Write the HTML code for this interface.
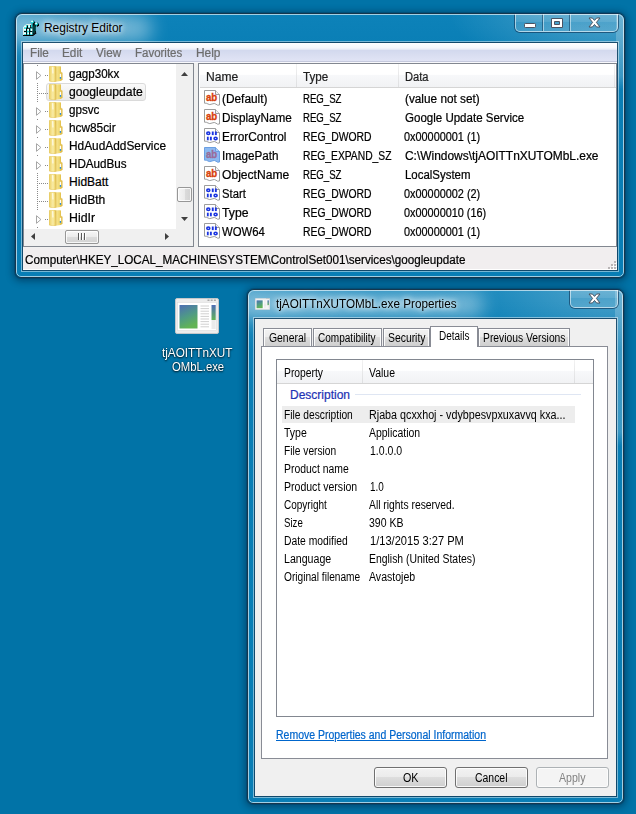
<!DOCTYPE html>
<html><head><meta charset="utf-8"><title>Registry Editor</title>
<style>
html,body{margin:0;padding:0}
body{width:636px;height:814px;position:relative;overflow:hidden;background:#0173a7;font-family:"Liberation Sans",sans-serif;font-size:12px;color:#000}
.a{position:absolute;white-space:pre}
.x{position:absolute;white-space:pre;display:block;transform-origin:0 0;-webkit-text-stroke:.22px currentColor}
.n{-webkit-text-stroke:0 transparent}
.win{position:absolute;border:1px solid #16364c;border-radius:7px 7px 6px 6px;box-shadow:0 0 0 1px rgba(0,35,65,.22),0 1px 7px 2px rgba(0,20,45,.44);box-sizing:border-box;background:#097eb5;overflow:visible}
.win .bg{position:absolute;left:0;top:0;right:0;bottom:0;border-radius:6px 6px 5px 5px;overflow:hidden}
.win .bg:before{content:"";position:absolute;left:0;top:0;right:0;bottom:0;border:1px solid rgba(255,255,255,.62);border-radius:6px 6px 5px 5px;z-index:3}
.cedge{position:absolute;box-sizing:border-box;border:1px solid rgba(20,60,90,.8);box-shadow:0 0 0 1px rgba(255,255,255,.45)}
.title{color:#000;text-shadow:0 0 5px rgba(255,255,255,.9),0 0 8px rgba(255,255,255,.8),0 0 12px rgba(255,255,255,.7)}
.cbtns{position:absolute;top:0;height:18px;box-sizing:border-box;border:1px solid rgba(255,255,255,.55);border-top:none;border-radius:0 0 5px 5px;box-shadow:0 0 0 1px rgba(15,55,90,.65);background:linear-gradient(180deg,rgba(255,255,255,.22) 0,rgba(255,255,255,.16) 45%,rgba(255,255,255,.08) 50%,rgba(255,255,255,.14) 100%)}
.cbtns i{position:absolute;top:0;width:1px;height:17px;background:rgba(255,255,255,.5);box-shadow:-1px 0 0 rgba(15,55,90,.55)}
.menu{position:absolute;left:23px;top:43px;width:594px;height:19px;background:linear-gradient(180deg,#ffffff 0,#f6f7fc 5px,#e7eaf6 6.5px,#d3d9ee 7.5px,#e1e4f5 18px,#c5c9dd 18px,#c5c9dd 19px);border-bottom:1px solid #f8f8fc}
.pane{position:absolute;background:#fff;box-sizing:border-box;border:1px solid #828790}
.fold{position:absolute;width:14px;height:16px}
.exp{position:absolute;width:6px;height:9px}
.vd{position:absolute;width:1px;background:repeating-linear-gradient(180deg,#8a8a8a 0,#8a8a8a 1px,transparent 1px,transparent 2px)}
.hd{position:absolute;height:1px;background:repeating-linear-gradient(90deg,#8a8a8a 0,#8a8a8a 1px,transparent 1px,transparent 2px)}
.sel{position:absolute;box-sizing:border-box;border:1px solid #dadada;border-radius:3px;background:linear-gradient(180deg,#fafafa,#eaeaea)}
.hdr{position:absolute;background:linear-gradient(180deg,#fff 0,#fff 45%,#f7f8fa 50%,#f1f2f4 100%);border-bottom:1px solid #d5d5d5}
.hsep{position:absolute;width:1px;background:linear-gradient(180deg,#f2f2f2,#dedfe1)}
.ic{position:absolute;width:16px;height:16px}
.sb{position:absolute;background:#f0f0f0}
.thumb{position:absolute;box-sizing:border-box;border:1px solid #979797;border-radius:2px}
.tab{position:absolute;box-sizing:border-box;border:1px solid #898c95;border-bottom:none;background:linear-gradient(180deg,#f2f2f2 0,#ebebeb 50%,#dddddd 50%,#cfcfcf 100%);box-shadow:inset 1px 1px 0 rgba(255,255,255,.9),inset -1px 0 0 rgba(255,255,255,.9)}
.btn{position:absolute;box-sizing:border-box;border:1px solid #707070;border-radius:3px;background:linear-gradient(180deg,#f2f2f2 0,#ebebeb 50%,#dddddd 50%,#cfcfcf 100%);box-shadow:inset 0 0 0 1px rgba(255,255,255,.85)}
</style></head><body>
<div class="win" style="left:15px;top:13px;width:610px;height:265px"><div class="bg"><div class="a" style="left:0;top:0;right:0;bottom:0;background:linear-gradient(180deg,#0d82b9 0,#0a7fb6 30px,#097eb5 100%)"></div><div class="a" style="left:0;top:0;width:120px;height:60px;background:radial-gradient(ellipse 100% 100% at 0 0,rgba(255,255,255,.16) 0,rgba(255,255,255,0) 100%)"></div><div class="a" style="left:-14px;top:1px;width:150px;height:27px;border-radius:13px;background:rgba(255,255,255,.42);filter:blur(9px)"></div><div class="a" style="right:0;top:0;width:175px;height:60px;background:radial-gradient(ellipse 100% 100% at 100% 0,rgba(255,255,255,.23) 0,rgba(255,255,255,.19) 35%,rgba(255,255,255,0) 100%)"></div><div class="a" style="right:0;top:0;width:8px;height:76px;background:linear-gradient(180deg,rgba(255,255,255,.2) 0,rgba(255,255,255,.2) 62px,rgba(255,255,255,0) 100%)"></div></div></div>
<span class="x title n" style="left:43.9px;top:21px;font-size:12px;line-height:14px;height:14px;">Registry Editor</span><svg class="a" style="left:23px;top:20px;width:16px;height:16px" viewBox="0 0 16 16"><path d="M0.4 7 L3.4 4.4 L9.6 4.4 L9.6 15 L0.4 15 Z" fill="#14d8d8"/><path d="M9.6 4.6 L13 3.2 L13 12.4 L9.6 15 Z" fill="#000"/><path d="M10.6 5.4 L11.4 5 L11.4 13 L10.6 13.6 Z M12.2 6.6 L12.8 6.3 L12.8 11 L12.2 11.5 Z" fill="#079a9a"/><path d="M0.5 15 L0.5 7 L3.4 4.5 L8 4.5" fill="none" stroke="#dfeeee" stroke-width="1"/><path d="M0 15.5 L9.8 15.5 L13.2 12.8" fill="none" stroke="#000" stroke-width="1.1"/><path d="M4.5 5.5 L4.5 8 L3.4 8 M3.4 8.4 L6.6 8.4 L6.6 11.4 L9.4 11.4 M7.5 5 L7.5 8 L9.4 8 M3.5 8.4 L3.5 11.5 M6.6 11.4 L6.6 14.8 M1 11.5 L3.5 11.5 M3.6 11.6 L3.6 14.8" fill="none" stroke="#000" stroke-width="1"/><rect x="1.2" y="5.8" width="2" height="1.6" fill="#fff"/><rect x="5.2" y="5.2" width="2" height="2.2" fill="#fff"/><rect x="1" y="8.8" width="2" height="1.8" fill="#fff"/><rect x="4.4" y="8.8" width="1.6" height="2" fill="#fff"/><rect x="7.8" y="8.6" width="1.4" height="2.4" fill="#fff"/><rect x="1" y="12.4" width="2" height="1.8" fill="#fff"/><rect x="4.4" y="12.4" width="1.6" height="1.8" fill="#fff"/><rect x="7.4" y="12.2" width="1.6" height="2" fill="#fff"/><path d="M10.4 0.5 l2.2 2.2 l-2.2 2.2 l-2.2 -2.2 Z" fill="#000"/><path d="M9.4 -0.1 l2 2 l-2 2 l-2 -2 Z" fill="#14d8d8"/><path d="M9.1 0.3 l1.1 1.1 l-1.1 1.1 l-1.1 -1.1 Z" fill="#fff"/><path d="M14.4 2.5 l2.2 2.2 l-2.2 2.2 l-2.2 -2.2 Z" fill="#000"/><path d="M13.4 1.9 l2 2 l-2 2 l-2 -2 Z" fill="#14d8d8"/><path d="M13.1 2.3 l1.1 1.1 l-1.1 1.1 l-1.1 -1.1 Z" fill="#fff"/></svg><div class="cbtns" style="left:515px;top:14px;width:103px"><i style="left:27px"></i><i style="left:54px"></i></div><svg class="a" style="left:524px;top:23px;width:12px;height:5px" viewBox="0 0 12 5"><rect x=".5" y=".5" width="11" height="4" rx=".8" fill="#fff" stroke="#4a5362"/></svg><svg class="a" style="left:551px;top:18px;width:12px;height:10px" viewBox="0 0 12 10"><path fill-rule="evenodd" d="M.5 .5 H11.5 V9.5 H.5 Z M3.5 3.5 V6.5 H8.5 V3.5 Z" fill="#fff" stroke="#4a5362"/></svg><svg class="a" style="left:588px;top:17px;width:13px;height:11px" viewBox="0 0 13 11"><path d="M1 1 L4.4 1 L6.5 3.4 L8.6 1 L12 1 L8.4 5.4 L12 10 L8.6 10 L6.5 7.5 L4.4 10 L1 10 L4.6 5.4 Z" fill="#fff" stroke="#4a5362" stroke-width="1" stroke-linejoin="round"/></svg>
<div class="cedge" style="left:22px;top:42px;width:596px;height:229px"></div>
<div class="menu"></div><span class="x" style="left:29.6px;top:46px;font-size:12px;line-height:14px;height:14px;color:#6d6d6d;transform:scaleX(0.9771);">File</span><span class="x" style="left:61.8px;top:46px;font-size:12px;line-height:14px;height:14px;color:#6d6d6d;transform:scaleX(0.9813);">Edit</span><span class="x" style="left:95.6px;top:46px;font-size:12px;line-height:14px;height:14px;color:#6d6d6d;transform:scaleX(0.9769);">View</span><span class="x" style="left:134.6px;top:46px;font-size:12px;line-height:14px;height:14px;color:#6d6d6d;transform:scaleX(0.9563);">Favorites</span><span class="x" style="left:195.6px;top:46px;font-size:12px;line-height:14px;height:14px;color:#6d6d6d;transform:scaleX(0.9924);">Help</span>
<div class="a" style="left:23px;top:63px;width:594px;height:207px;background:#f0f0f0"></div>
<div class="pane" style="left:23px;top:63px;width:171px;height:184px"></div>
<div class="sel" style="left:46px;top:83px;width:100px;height:18px"></div><div class="vd" style="left:37px;top:65px;height:1px"></div><div class="hd" style="left:45px;top:75px;width:4px"></div><svg class="exp" style="left:36px;top:71px" viewBox="0 0 6 9"><path d="M0.5 0.7 L0.5 8.3 L4.9 4.5 Z" fill="#fff" stroke="#a6a6a6" stroke-width="1"/></svg><svg class="fold" style="left:49px;top:66px" viewBox="0 0 14 16"><defs><linearGradient id="fA1" x1="0" y1="0" x2="1" y2="0"><stop offset="0" stop-color="#e6c650"/><stop offset=".22" stop-color="#f2dc80"/><stop offset=".6" stop-color="#f9eca8"/><stop offset=".85" stop-color="#f1da78"/><stop offset="1" stop-color="#dcb640"/></linearGradient><linearGradient id="fB1" x1="0" y1="0" x2="1" y2="0"><stop offset="0" stop-color="#dbb640"/><stop offset=".3" stop-color="#f5e28c"/><stop offset=".75" stop-color="#efd66c"/><stop offset="1" stop-color="#dfba44"/></linearGradient></defs><path d="M11.2 6 L12.8 6.4 Q13.3 6.5 13.3 7 L13.3 13.6 Q13.3 14.1 12.8 14.2 L11.2 14.6 Z" fill="#e5c24c" stroke="#d9b43e" stroke-width=".4"/><path d="M6.2 0.9 Q6.2 0.3 6.9 0.3 L11.3 0.2 Q12 0.2 12 0.9 L12 14.3 Q12 14.9 11.4 15 L6.8 15.7 Z" fill="url(#fB1)"/><path d="M0.2 1 Q0.2 0.2 1 0.2 L5.6 0.05 Q6.5 0.05 6.5 0.9 L6.6 15.2 Q6.6 16 5.7 15.95 L1 15.3 Q0.2 15.2 0.2 14.4 Z" fill="url(#fA1)" stroke="#e0bc46" stroke-width=".45"/><path d="M3.7 1.6 L3.9 7" stroke="#fffdf0" stroke-width="1.1" stroke-linecap="round" opacity=".95"/><rect x="10.8" y="7.8" width="1.3" height="3.3" fill="#fdfdfd"/><rect x="10.8" y="11" width="1.3" height="1.8" fill="#2a8fe0"/></svg><span class="x" style="left:69.1px;top:67px;font-size:12px;line-height:14px;height:14px;transform:scaleX(0.9645);">gagp30kx</span><div class="vd" style="left:37px;top:83px;height:18px"></div><div class="hd" style="left:37px;top:93px;width:12px"></div><svg class="fold" style="left:49px;top:84px" viewBox="0 0 14 16"><defs><linearGradient id="fA2" x1="0" y1="0" x2="1" y2="0"><stop offset="0" stop-color="#e6c650"/><stop offset=".22" stop-color="#f2dc80"/><stop offset=".6" stop-color="#f9eca8"/><stop offset=".85" stop-color="#f1da78"/><stop offset="1" stop-color="#dcb640"/></linearGradient><linearGradient id="fB2" x1="0" y1="0" x2="1" y2="0"><stop offset="0" stop-color="#dbb640"/><stop offset=".3" stop-color="#f5e28c"/><stop offset=".75" stop-color="#efd66c"/><stop offset="1" stop-color="#dfba44"/></linearGradient></defs><path d="M11.2 6 L12.8 6.4 Q13.3 6.5 13.3 7 L13.3 13.6 Q13.3 14.1 12.8 14.2 L11.2 14.6 Z" fill="#e5c24c" stroke="#d9b43e" stroke-width=".4"/><path d="M6.2 0.9 Q6.2 0.3 6.9 0.3 L11.3 0.2 Q12 0.2 12 0.9 L12 14.3 Q12 14.9 11.4 15 L6.8 15.7 Z" fill="url(#fB2)"/><path d="M0.2 1 Q0.2 0.2 1 0.2 L5.6 0.05 Q6.5 0.05 6.5 0.9 L6.6 15.2 Q6.6 16 5.7 15.95 L1 15.3 Q0.2 15.2 0.2 14.4 Z" fill="url(#fA2)" stroke="#e0bc46" stroke-width=".45"/><path d="M3.7 1.6 L3.9 7" stroke="#fffdf0" stroke-width="1.1" stroke-linecap="round" opacity=".95"/><rect x="10.8" y="7.8" width="1.3" height="3.3" fill="#fdfdfd"/><rect x="10.8" y="11" width="1.3" height="1.8" fill="#2a8fe0"/></svg><span class="x" style="left:69.1px;top:85px;font-size:12px;line-height:14px;height:14px;transform:scaleX(1.0144);">googleupdate</span><div class="vd" style="left:37px;top:101px;height:1px"></div><div class="hd" style="left:45px;top:111px;width:4px"></div><svg class="exp" style="left:36px;top:107px" viewBox="0 0 6 9"><path d="M0.5 0.7 L0.5 8.3 L4.9 4.5 Z" fill="#fff" stroke="#a6a6a6" stroke-width="1"/></svg><svg class="fold" style="left:49px;top:102px" viewBox="0 0 14 16"><defs><linearGradient id="fA3" x1="0" y1="0" x2="1" y2="0"><stop offset="0" stop-color="#e6c650"/><stop offset=".22" stop-color="#f2dc80"/><stop offset=".6" stop-color="#f9eca8"/><stop offset=".85" stop-color="#f1da78"/><stop offset="1" stop-color="#dcb640"/></linearGradient><linearGradient id="fB3" x1="0" y1="0" x2="1" y2="0"><stop offset="0" stop-color="#dbb640"/><stop offset=".3" stop-color="#f5e28c"/><stop offset=".75" stop-color="#efd66c"/><stop offset="1" stop-color="#dfba44"/></linearGradient></defs><path d="M11.2 6 L12.8 6.4 Q13.3 6.5 13.3 7 L13.3 13.6 Q13.3 14.1 12.8 14.2 L11.2 14.6 Z" fill="#e5c24c" stroke="#d9b43e" stroke-width=".4"/><path d="M6.2 0.9 Q6.2 0.3 6.9 0.3 L11.3 0.2 Q12 0.2 12 0.9 L12 14.3 Q12 14.9 11.4 15 L6.8 15.7 Z" fill="url(#fB3)"/><path d="M0.2 1 Q0.2 0.2 1 0.2 L5.6 0.05 Q6.5 0.05 6.5 0.9 L6.6 15.2 Q6.6 16 5.7 15.95 L1 15.3 Q0.2 15.2 0.2 14.4 Z" fill="url(#fA3)" stroke="#e0bc46" stroke-width=".45"/><path d="M3.7 1.6 L3.9 7" stroke="#fffdf0" stroke-width="1.1" stroke-linecap="round" opacity=".95"/><rect x="10.8" y="7.8" width="1.3" height="3.3" fill="#fdfdfd"/><rect x="10.8" y="11" width="1.3" height="1.8" fill="#2a8fe0"/></svg><span class="x" style="left:69.1px;top:103px;font-size:12px;line-height:14px;height:14px;transform:scaleX(0.9694);">gpsvc</span><div class="vd" style="left:37px;top:119px;height:1px"></div><div class="hd" style="left:45px;top:129px;width:4px"></div><svg class="exp" style="left:36px;top:125px" viewBox="0 0 6 9"><path d="M0.5 0.7 L0.5 8.3 L4.9 4.5 Z" fill="#fff" stroke="#a6a6a6" stroke-width="1"/></svg><svg class="fold" style="left:49px;top:120px" viewBox="0 0 14 16"><defs><linearGradient id="fA4" x1="0" y1="0" x2="1" y2="0"><stop offset="0" stop-color="#e6c650"/><stop offset=".22" stop-color="#f2dc80"/><stop offset=".6" stop-color="#f9eca8"/><stop offset=".85" stop-color="#f1da78"/><stop offset="1" stop-color="#dcb640"/></linearGradient><linearGradient id="fB4" x1="0" y1="0" x2="1" y2="0"><stop offset="0" stop-color="#dbb640"/><stop offset=".3" stop-color="#f5e28c"/><stop offset=".75" stop-color="#efd66c"/><stop offset="1" stop-color="#dfba44"/></linearGradient></defs><path d="M11.2 6 L12.8 6.4 Q13.3 6.5 13.3 7 L13.3 13.6 Q13.3 14.1 12.8 14.2 L11.2 14.6 Z" fill="#e5c24c" stroke="#d9b43e" stroke-width=".4"/><path d="M6.2 0.9 Q6.2 0.3 6.9 0.3 L11.3 0.2 Q12 0.2 12 0.9 L12 14.3 Q12 14.9 11.4 15 L6.8 15.7 Z" fill="url(#fB4)"/><path d="M0.2 1 Q0.2 0.2 1 0.2 L5.6 0.05 Q6.5 0.05 6.5 0.9 L6.6 15.2 Q6.6 16 5.7 15.95 L1 15.3 Q0.2 15.2 0.2 14.4 Z" fill="url(#fA4)" stroke="#e0bc46" stroke-width=".45"/><path d="M3.7 1.6 L3.9 7" stroke="#fffdf0" stroke-width="1.1" stroke-linecap="round" opacity=".95"/><rect x="10.8" y="7.8" width="1.3" height="3.3" fill="#fdfdfd"/><rect x="10.8" y="11" width="1.3" height="1.8" fill="#2a8fe0"/></svg><span class="x" style="left:69.1px;top:121px;font-size:12px;line-height:14px;height:14px;transform:scaleX(0.9861);">hcw85cir</span><div class="vd" style="left:37px;top:137px;height:1px"></div><div class="hd" style="left:45px;top:147px;width:4px"></div><svg class="exp" style="left:36px;top:143px" viewBox="0 0 6 9"><path d="M0.5 0.7 L0.5 8.3 L4.9 4.5 Z" fill="#fff" stroke="#a6a6a6" stroke-width="1"/></svg><svg class="fold" style="left:49px;top:138px" viewBox="0 0 14 16"><defs><linearGradient id="fA5" x1="0" y1="0" x2="1" y2="0"><stop offset="0" stop-color="#e6c650"/><stop offset=".22" stop-color="#f2dc80"/><stop offset=".6" stop-color="#f9eca8"/><stop offset=".85" stop-color="#f1da78"/><stop offset="1" stop-color="#dcb640"/></linearGradient><linearGradient id="fB5" x1="0" y1="0" x2="1" y2="0"><stop offset="0" stop-color="#dbb640"/><stop offset=".3" stop-color="#f5e28c"/><stop offset=".75" stop-color="#efd66c"/><stop offset="1" stop-color="#dfba44"/></linearGradient></defs><path d="M11.2 6 L12.8 6.4 Q13.3 6.5 13.3 7 L13.3 13.6 Q13.3 14.1 12.8 14.2 L11.2 14.6 Z" fill="#e5c24c" stroke="#d9b43e" stroke-width=".4"/><path d="M6.2 0.9 Q6.2 0.3 6.9 0.3 L11.3 0.2 Q12 0.2 12 0.9 L12 14.3 Q12 14.9 11.4 15 L6.8 15.7 Z" fill="url(#fB5)"/><path d="M0.2 1 Q0.2 0.2 1 0.2 L5.6 0.05 Q6.5 0.05 6.5 0.9 L6.6 15.2 Q6.6 16 5.7 15.95 L1 15.3 Q0.2 15.2 0.2 14.4 Z" fill="url(#fA5)" stroke="#e0bc46" stroke-width=".45"/><path d="M3.7 1.6 L3.9 7" stroke="#fffdf0" stroke-width="1.1" stroke-linecap="round" opacity=".95"/><rect x="10.8" y="7.8" width="1.3" height="3.3" fill="#fdfdfd"/><rect x="10.8" y="11" width="1.3" height="1.8" fill="#2a8fe0"/></svg><span class="x" style="left:69.1px;top:139px;font-size:12px;line-height:14px;height:14px;transform:scaleX(0.9892);">HdAudAddService</span><div class="vd" style="left:37px;top:155px;height:1px"></div><div class="hd" style="left:45px;top:165px;width:4px"></div><svg class="exp" style="left:36px;top:161px" viewBox="0 0 6 9"><path d="M0.5 0.7 L0.5 8.3 L4.9 4.5 Z" fill="#fff" stroke="#a6a6a6" stroke-width="1"/></svg><svg class="fold" style="left:49px;top:156px" viewBox="0 0 14 16"><defs><linearGradient id="fA6" x1="0" y1="0" x2="1" y2="0"><stop offset="0" stop-color="#e6c650"/><stop offset=".22" stop-color="#f2dc80"/><stop offset=".6" stop-color="#f9eca8"/><stop offset=".85" stop-color="#f1da78"/><stop offset="1" stop-color="#dcb640"/></linearGradient><linearGradient id="fB6" x1="0" y1="0" x2="1" y2="0"><stop offset="0" stop-color="#dbb640"/><stop offset=".3" stop-color="#f5e28c"/><stop offset=".75" stop-color="#efd66c"/><stop offset="1" stop-color="#dfba44"/></linearGradient></defs><path d="M11.2 6 L12.8 6.4 Q13.3 6.5 13.3 7 L13.3 13.6 Q13.3 14.1 12.8 14.2 L11.2 14.6 Z" fill="#e5c24c" stroke="#d9b43e" stroke-width=".4"/><path d="M6.2 0.9 Q6.2 0.3 6.9 0.3 L11.3 0.2 Q12 0.2 12 0.9 L12 14.3 Q12 14.9 11.4 15 L6.8 15.7 Z" fill="url(#fB6)"/><path d="M0.2 1 Q0.2 0.2 1 0.2 L5.6 0.05 Q6.5 0.05 6.5 0.9 L6.6 15.2 Q6.6 16 5.7 15.95 L1 15.3 Q0.2 15.2 0.2 14.4 Z" fill="url(#fA6)" stroke="#e0bc46" stroke-width=".45"/><path d="M3.7 1.6 L3.9 7" stroke="#fffdf0" stroke-width="1.1" stroke-linecap="round" opacity=".95"/><rect x="10.8" y="7.8" width="1.3" height="3.3" fill="#fdfdfd"/><rect x="10.8" y="11" width="1.3" height="1.8" fill="#2a8fe0"/></svg><span class="x" style="left:69.1px;top:157px;font-size:12px;line-height:14px;height:14px;transform:scaleX(0.9718);">HDAudBus</span><div class="vd" style="left:37px;top:173px;height:18px"></div><div class="hd" style="left:37px;top:183px;width:12px"></div><svg class="fold" style="left:49px;top:174px" viewBox="0 0 14 16"><defs><linearGradient id="fA7" x1="0" y1="0" x2="1" y2="0"><stop offset="0" stop-color="#e6c650"/><stop offset=".22" stop-color="#f2dc80"/><stop offset=".6" stop-color="#f9eca8"/><stop offset=".85" stop-color="#f1da78"/><stop offset="1" stop-color="#dcb640"/></linearGradient><linearGradient id="fB7" x1="0" y1="0" x2="1" y2="0"><stop offset="0" stop-color="#dbb640"/><stop offset=".3" stop-color="#f5e28c"/><stop offset=".75" stop-color="#efd66c"/><stop offset="1" stop-color="#dfba44"/></linearGradient></defs><path d="M11.2 6 L12.8 6.4 Q13.3 6.5 13.3 7 L13.3 13.6 Q13.3 14.1 12.8 14.2 L11.2 14.6 Z" fill="#e5c24c" stroke="#d9b43e" stroke-width=".4"/><path d="M6.2 0.9 Q6.2 0.3 6.9 0.3 L11.3 0.2 Q12 0.2 12 0.9 L12 14.3 Q12 14.9 11.4 15 L6.8 15.7 Z" fill="url(#fB7)"/><path d="M0.2 1 Q0.2 0.2 1 0.2 L5.6 0.05 Q6.5 0.05 6.5 0.9 L6.6 15.2 Q6.6 16 5.7 15.95 L1 15.3 Q0.2 15.2 0.2 14.4 Z" fill="url(#fA7)" stroke="#e0bc46" stroke-width=".45"/><path d="M3.7 1.6 L3.9 7" stroke="#fffdf0" stroke-width="1.1" stroke-linecap="round" opacity=".95"/><rect x="10.8" y="7.8" width="1.3" height="3.3" fill="#fdfdfd"/><rect x="10.8" y="11" width="1.3" height="1.8" fill="#2a8fe0"/></svg><span class="x" style="left:69.1px;top:175px;font-size:12px;line-height:14px;height:14px;">HidBatt</span><div class="vd" style="left:37px;top:191px;height:18px"></div><div class="hd" style="left:37px;top:201px;width:12px"></div><svg class="fold" style="left:49px;top:192px" viewBox="0 0 14 16"><defs><linearGradient id="fA8" x1="0" y1="0" x2="1" y2="0"><stop offset="0" stop-color="#e6c650"/><stop offset=".22" stop-color="#f2dc80"/><stop offset=".6" stop-color="#f9eca8"/><stop offset=".85" stop-color="#f1da78"/><stop offset="1" stop-color="#dcb640"/></linearGradient><linearGradient id="fB8" x1="0" y1="0" x2="1" y2="0"><stop offset="0" stop-color="#dbb640"/><stop offset=".3" stop-color="#f5e28c"/><stop offset=".75" stop-color="#efd66c"/><stop offset="1" stop-color="#dfba44"/></linearGradient></defs><path d="M11.2 6 L12.8 6.4 Q13.3 6.5 13.3 7 L13.3 13.6 Q13.3 14.1 12.8 14.2 L11.2 14.6 Z" fill="#e5c24c" stroke="#d9b43e" stroke-width=".4"/><path d="M6.2 0.9 Q6.2 0.3 6.9 0.3 L11.3 0.2 Q12 0.2 12 0.9 L12 14.3 Q12 14.9 11.4 15 L6.8 15.7 Z" fill="url(#fB8)"/><path d="M0.2 1 Q0.2 0.2 1 0.2 L5.6 0.05 Q6.5 0.05 6.5 0.9 L6.6 15.2 Q6.6 16 5.7 15.95 L1 15.3 Q0.2 15.2 0.2 14.4 Z" fill="url(#fA8)" stroke="#e0bc46" stroke-width=".45"/><path d="M3.7 1.6 L3.9 7" stroke="#fffdf0" stroke-width="1.1" stroke-linecap="round" opacity=".95"/><rect x="10.8" y="7.8" width="1.3" height="3.3" fill="#fdfdfd"/><rect x="10.8" y="11" width="1.3" height="1.8" fill="#2a8fe0"/></svg><span class="x" style="left:69.1px;top:193px;font-size:12px;line-height:14px;height:14px;transform:scaleX(1.0075);">HidBth</span><div class="vd" style="left:37px;top:209px;height:1px"></div><div class="hd" style="left:45px;top:219px;width:4px"></div><svg class="exp" style="left:36px;top:215px" viewBox="0 0 6 9"><path d="M0.5 0.7 L0.5 8.3 L4.9 4.5 Z" fill="#fff" stroke="#a6a6a6" stroke-width="1"/></svg><svg class="fold" style="left:49px;top:210px" viewBox="0 0 14 16"><defs><linearGradient id="fA9" x1="0" y1="0" x2="1" y2="0"><stop offset="0" stop-color="#e6c650"/><stop offset=".22" stop-color="#f2dc80"/><stop offset=".6" stop-color="#f9eca8"/><stop offset=".85" stop-color="#f1da78"/><stop offset="1" stop-color="#dcb640"/></linearGradient><linearGradient id="fB9" x1="0" y1="0" x2="1" y2="0"><stop offset="0" stop-color="#dbb640"/><stop offset=".3" stop-color="#f5e28c"/><stop offset=".75" stop-color="#efd66c"/><stop offset="1" stop-color="#dfba44"/></linearGradient></defs><path d="M11.2 6 L12.8 6.4 Q13.3 6.5 13.3 7 L13.3 13.6 Q13.3 14.1 12.8 14.2 L11.2 14.6 Z" fill="#e5c24c" stroke="#d9b43e" stroke-width=".4"/><path d="M6.2 0.9 Q6.2 0.3 6.9 0.3 L11.3 0.2 Q12 0.2 12 0.9 L12 14.3 Q12 14.9 11.4 15 L6.8 15.7 Z" fill="url(#fB9)"/><path d="M0.2 1 Q0.2 0.2 1 0.2 L5.6 0.05 Q6.5 0.05 6.5 0.9 L6.6 15.2 Q6.6 16 5.7 15.95 L1 15.3 Q0.2 15.2 0.2 14.4 Z" fill="url(#fA9)" stroke="#e0bc46" stroke-width=".45"/><path d="M3.7 1.6 L3.9 7" stroke="#fffdf0" stroke-width="1.1" stroke-linecap="round" opacity=".95"/><rect x="10.8" y="7.8" width="1.3" height="3.3" fill="#fdfdfd"/><rect x="10.8" y="11" width="1.3" height="1.8" fill="#2a8fe0"/></svg><span class="x" style="left:69.1px;top:211px;font-size:12px;line-height:14px;height:14px;transform:scaleX(1.0259);">HidIr</span><div class="vd" style="left:37px;top:227px;height:1px"></div><div class="sb" style="left:176px;top:64px;width:17px;height:182px"></div><div class="sb" style="left:24px;top:229px;width:152px;height:17px"></div><svg class="a" style="left:181px;top:72px;width:7px;height:4px" viewBox="0 0 7 4"><path d="M0 4 L3.5 0 L7 4 Z" fill="#404040"/></svg><svg class="a" style="left:181px;top:217px;width:7px;height:4px" viewBox="0 0 7 4"><path d="M0 0 L3.5 4 L7 0 Z" fill="#404040"/></svg><svg class="a" style="left:31px;top:233px;width:4px;height:7px" viewBox="0 0 4 7"><path d="M4 0 L0 3.5 L4 7 Z" fill="#404040"/></svg><svg class="a" style="left:165px;top:233px;width:4px;height:7px" viewBox="0 0 4 7"><path d="M0 0 L4 3.5 L0 7 Z" fill="#404040"/></svg><div class="thumb" style="left:177px;top:187px;width:15px;height:15px;background:linear-gradient(90deg,#f6f6f6 0,#ebebeb 50%,#dcdcdc 50%,#d2d2d2 100%);box-shadow:inset 0 0 0 1px rgba(255,255,255,.8)"></div><div class="thumb" style="left:65px;top:230px;width:34px;height:14px;background:linear-gradient(180deg,#f6f6f6 0,#ebebeb 50%,#dcdcdc 50%,#d2d2d2 100%);box-shadow:inset 0 0 0 1px rgba(255,255,255,.8)"></div><div class="a" style="left:78px;top:233px;width:1px;height:7px;background:#5a5a5a;box-shadow:1px 0 0 #fff"></div><div class="a" style="left:81px;top:233px;width:1px;height:7px;background:#5a5a5a;box-shadow:1px 0 0 #fff"></div><div class="a" style="left:84px;top:233px;width:1px;height:7px;background:#5a5a5a;box-shadow:1px 0 0 #fff"></div>
<div class="pane" style="left:198px;top:63px;width:419px;height:184px"></div>
<div class="hdr" style="left:200px;top:64px;width:416px;height:23px"></div><div class="hsep" style="left:296px;top:64px;height:23px"></div><div class="hsep" style="left:398px;top:64px;height:23px"></div><div class="hsep" style="left:614px;top:64px;height:23px"></div><span class="x" style="left:205.9px;top:70px;font-size:12px;line-height:14px;height:14px;color:#1e1e1e;transform:scaleX(1.0058);">Name</span><span class="x" style="left:303.3px;top:70px;font-size:12px;line-height:14px;height:14px;color:#1e1e1e;transform:scaleX(0.9686);">Type</span><span class="x" style="left:405.2px;top:70px;font-size:12px;line-height:14px;height:14px;color:#1e1e1e;transform:scaleX(0.9267);">Data</span><svg class="ic" style="left:204px;top:90px" viewBox="0 0 16 16"><path d="M0.5 0.5 L11.5 0.5 L15.5 4.5 L15.5 15 Q13.5 15.8 12 14.2 Q10.5 12.8 8 14 Q5.5 15.2 4 14 Q2.2 12.8 0.5 13.2 Z" fill="#fff" stroke="#9d9d9d" stroke-width="1"/><path d="M11.5 0.5 L11.5 4.5 L15.5 4.5" fill="#f4f4f4" stroke="#9d9d9d" stroke-width="1"/><text x="1.9" y="10.6" font-family="Liberation Sans,sans-serif" font-weight="bold" font-size="10.6" fill="#d8400c" stroke="#d8400c" stroke-width=".35" textLength="11.3" lengthAdjust="spacingAndGlyphs">ab</text></svg><span class="x" style="left:221.9px;top:92px;font-size:12px;line-height:14px;height:14px;transform:scaleX(0.9888);">(Default)</span><span class="x" style="left:303.3px;top:92px;font-size:12px;line-height:14px;height:14px;transform:scaleX(0.8018);">REG_SZ</span><span class="x" style="left:405.2px;top:92px;font-size:12px;line-height:14px;height:14px;transform:scaleX(0.9823);">(value not set)</span><svg class="ic" style="left:204px;top:109px" viewBox="0 0 16 16"><path d="M0.5 0.5 L11.5 0.5 L15.5 4.5 L15.5 15 Q13.5 15.8 12 14.2 Q10.5 12.8 8 14 Q5.5 15.2 4 14 Q2.2 12.8 0.5 13.2 Z" fill="#fff" stroke="#9d9d9d" stroke-width="1"/><path d="M11.5 0.5 L11.5 4.5 L15.5 4.5" fill="#f4f4f4" stroke="#9d9d9d" stroke-width="1"/><text x="1.9" y="10.6" font-family="Liberation Sans,sans-serif" font-weight="bold" font-size="10.6" fill="#d8400c" stroke="#d8400c" stroke-width=".35" textLength="11.3" lengthAdjust="spacingAndGlyphs">ab</text></svg><span class="x" style="left:221.9px;top:111px;font-size:12px;line-height:14px;height:14px;transform:scaleX(0.9781);">DisplayName</span><span class="x" style="left:303.3px;top:111px;font-size:12px;line-height:14px;height:14px;transform:scaleX(0.8018);">REG_SZ</span><span class="x" style="left:405.2px;top:111px;font-size:12px;line-height:14px;height:14px;transform:scaleX(0.9607);">Google Update Service</span><svg class="ic" style="left:204px;top:128px" viewBox="0 0 16 16"><path d="M0.5 0.5 L11.5 0.5 L15.5 4.5 L15.5 15 Q13.5 15.8 12 14.2 Q10.5 12.8 8 14 Q5.5 15.2 4 14 Q2.2 12.8 0.5 13.2 Z" fill="#fff" stroke="#9d9d9d" stroke-width="1"/><path d="M11.5 0.5 L11.5 4.5 L15.5 4.5" fill="#f4f4f4" stroke="#9d9d9d" stroke-width="1"/><ellipse cx="4.3" cy="5.3" rx="1.55" ry="1.2" fill="none" stroke="#1a34e0" stroke-width="1.5"/><rect x="7.8" y="3.5" width="1.9" height="3.6" fill="#1a34e0"/><rect x="10.9" y="3.5" width="1.9" height="3.6" fill="#1a34e0"/><rect x="2.9" y="8.7" width="1.8" height="3.6" fill="#1a34e0"/><rect x="5.9" y="8.7" width="1.9" height="3.6" fill="#1a34e0"/><ellipse cx="11.6" cy="10.5" rx="1.55" ry="1.2" fill="none" stroke="#1a34e0" stroke-width="1.5"/></svg><span class="x" style="left:221.9px;top:130px;font-size:12px;line-height:14px;height:14px;transform:scaleX(0.9869);">ErrorControl</span><span class="x" style="left:303.3px;top:130px;font-size:12px;line-height:14px;height:14px;transform:scaleX(0.8633);">REG_DWORD</span><span class="x" style="left:404.4px;top:130px;font-size:12px;line-height:14px;height:14px;transform:scaleX(0.9063);">0x00000001 (1)</span><svg class="ic" style="left:204px;top:147px" viewBox="0 0 16 16"><path d="M0.5 0.5 L11.5 0.5 L15.5 4.5 L15.5 15 Q13.5 15.8 12 14.2 Q10.5 12.8 8 14 Q5.5 15.2 4 14 Q2.2 12.8 0.5 13.2 Z" fill="#8cb9f1" stroke="#6b9fe2" stroke-width="1"/><path d="M11.5 0.5 L11.5 4.5 L15.5 4.5" fill="#a9ccf6" stroke="#6b9fe2" stroke-width="1"/><text x="1.9" y="10.6" font-family="Liberation Sans,sans-serif" font-weight="bold" font-size="10.6" fill="#9a6b99" stroke="#9a6b99" stroke-width=".35" textLength="11.3" lengthAdjust="spacingAndGlyphs">ab</text></svg><span class="x" style="left:221.9px;top:149px;font-size:12px;line-height:14px;height:14px;transform:scaleX(0.9734);">ImagePath</span><span class="x" style="left:303.3px;top:149px;font-size:12px;line-height:14px;height:14px;transform:scaleX(0.8579);">REG_EXPAND_SZ</span><span class="x" style="left:405.2px;top:149px;font-size:12px;line-height:14px;height:14px;transform:scaleX(0.9949);">C:\Windows\tjAOITTnXUTOMbL.exe</span><svg class="ic" style="left:204px;top:166px" viewBox="0 0 16 16"><path d="M0.5 0.5 L11.5 0.5 L15.5 4.5 L15.5 15 Q13.5 15.8 12 14.2 Q10.5 12.8 8 14 Q5.5 15.2 4 14 Q2.2 12.8 0.5 13.2 Z" fill="#fff" stroke="#9d9d9d" stroke-width="1"/><path d="M11.5 0.5 L11.5 4.5 L15.5 4.5" fill="#f4f4f4" stroke="#9d9d9d" stroke-width="1"/><text x="1.9" y="10.6" font-family="Liberation Sans,sans-serif" font-weight="bold" font-size="10.6" fill="#d8400c" stroke="#d8400c" stroke-width=".35" textLength="11.3" lengthAdjust="spacingAndGlyphs">ab</text></svg><span class="x" style="left:221.9px;top:168px;font-size:12px;line-height:14px;height:14px;transform:scaleX(1.0074);">ObjectName</span><span class="x" style="left:303.3px;top:168px;font-size:12px;line-height:14px;height:14px;transform:scaleX(0.8018);">REG_SZ</span><span class="x" style="left:405.2px;top:168px;font-size:12px;line-height:14px;height:14px;transform:scaleX(0.9534);">LocalSystem</span><svg class="ic" style="left:204px;top:185px" viewBox="0 0 16 16"><path d="M0.5 0.5 L11.5 0.5 L15.5 4.5 L15.5 15 Q13.5 15.8 12 14.2 Q10.5 12.8 8 14 Q5.5 15.2 4 14 Q2.2 12.8 0.5 13.2 Z" fill="#fff" stroke="#9d9d9d" stroke-width="1"/><path d="M11.5 0.5 L11.5 4.5 L15.5 4.5" fill="#f4f4f4" stroke="#9d9d9d" stroke-width="1"/><ellipse cx="4.3" cy="5.3" rx="1.55" ry="1.2" fill="none" stroke="#1a34e0" stroke-width="1.5"/><rect x="7.8" y="3.5" width="1.9" height="3.6" fill="#1a34e0"/><rect x="10.9" y="3.5" width="1.9" height="3.6" fill="#1a34e0"/><rect x="2.9" y="8.7" width="1.8" height="3.6" fill="#1a34e0"/><rect x="5.9" y="8.7" width="1.9" height="3.6" fill="#1a34e0"/><ellipse cx="11.6" cy="10.5" rx="1.55" ry="1.2" fill="none" stroke="#1a34e0" stroke-width="1.5"/></svg><span class="x" style="left:221.9px;top:187px;font-size:12px;line-height:14px;height:14px;transform:scaleX(0.9391);">Start</span><span class="x" style="left:303.3px;top:187px;font-size:12px;line-height:14px;height:14px;transform:scaleX(0.8633);">REG_DWORD</span><span class="x" style="left:404.4px;top:187px;font-size:12px;line-height:14px;height:14px;transform:scaleX(0.9063);">0x00000002 (2)</span><svg class="ic" style="left:204px;top:204px" viewBox="0 0 16 16"><path d="M0.5 0.5 L11.5 0.5 L15.5 4.5 L15.5 15 Q13.5 15.8 12 14.2 Q10.5 12.8 8 14 Q5.5 15.2 4 14 Q2.2 12.8 0.5 13.2 Z" fill="#fff" stroke="#9d9d9d" stroke-width="1"/><path d="M11.5 0.5 L11.5 4.5 L15.5 4.5" fill="#f4f4f4" stroke="#9d9d9d" stroke-width="1"/><ellipse cx="4.3" cy="5.3" rx="1.55" ry="1.2" fill="none" stroke="#1a34e0" stroke-width="1.5"/><rect x="7.8" y="3.5" width="1.9" height="3.6" fill="#1a34e0"/><rect x="10.9" y="3.5" width="1.9" height="3.6" fill="#1a34e0"/><rect x="2.9" y="8.7" width="1.8" height="3.6" fill="#1a34e0"/><rect x="5.9" y="8.7" width="1.9" height="3.6" fill="#1a34e0"/><ellipse cx="11.6" cy="10.5" rx="1.55" ry="1.2" fill="none" stroke="#1a34e0" stroke-width="1.5"/></svg><span class="x" style="left:221.9px;top:206px;font-size:12px;line-height:14px;height:14px;transform:scaleX(1.0186);">Type</span><span class="x" style="left:303.3px;top:206px;font-size:12px;line-height:14px;height:14px;transform:scaleX(0.8633);">REG_DWORD</span><span class="x" style="left:404.4px;top:206px;font-size:12px;line-height:14px;height:14px;transform:scaleX(0.9058);">0x00000010 (16)</span><svg class="ic" style="left:204px;top:223px" viewBox="0 0 16 16"><path d="M0.5 0.5 L11.5 0.5 L15.5 4.5 L15.5 15 Q13.5 15.8 12 14.2 Q10.5 12.8 8 14 Q5.5 15.2 4 14 Q2.2 12.8 0.5 13.2 Z" fill="#fff" stroke="#9d9d9d" stroke-width="1"/><path d="M11.5 0.5 L11.5 4.5 L15.5 4.5" fill="#f4f4f4" stroke="#9d9d9d" stroke-width="1"/><ellipse cx="4.3" cy="5.3" rx="1.55" ry="1.2" fill="none" stroke="#1a34e0" stroke-width="1.5"/><rect x="7.8" y="3.5" width="1.9" height="3.6" fill="#1a34e0"/><rect x="10.9" y="3.5" width="1.9" height="3.6" fill="#1a34e0"/><rect x="2.9" y="8.7" width="1.8" height="3.6" fill="#1a34e0"/><rect x="5.9" y="8.7" width="1.9" height="3.6" fill="#1a34e0"/><ellipse cx="11.6" cy="10.5" rx="1.55" ry="1.2" fill="none" stroke="#1a34e0" stroke-width="1.5"/></svg><span class="x" style="left:221.9px;top:225px;font-size:12px;line-height:14px;height:14px;transform:scaleX(0.9439);">WOW64</span><span class="x" style="left:303.3px;top:225px;font-size:12px;line-height:14px;height:14px;transform:scaleX(0.8633);">REG_DWORD</span><span class="x" style="left:404.4px;top:225px;font-size:12px;line-height:14px;height:14px;transform:scaleX(0.9063);">0x00000001 (1)</span>
<div class="a" style="left:23px;top:248px;width:594px;height:22px;background:#f1eeef;border-bottom:1px solid #fff;box-sizing:border-box"></div><div class="a" style="left:608px;top:267px;width:2px;height:2px;background:#b9b5b6;box-shadow:1px 1px 0 #fff"></div><div class="a" style="left:611px;top:267px;width:2px;height:2px;background:#b9b5b6;box-shadow:1px 1px 0 #fff"></div><div class="a" style="left:614px;top:267px;width:2px;height:2px;background:#b9b5b6;box-shadow:1px 1px 0 #fff"></div><div class="a" style="left:611px;top:264px;width:2px;height:2px;background:#b9b5b6;box-shadow:1px 1px 0 #fff"></div><div class="a" style="left:614px;top:264px;width:2px;height:2px;background:#b9b5b6;box-shadow:1px 1px 0 #fff"></div><div class="a" style="left:614px;top:261px;width:2px;height:2px;background:#b9b5b6;box-shadow:1px 1px 0 #fff"></div><span class="x" style="left:25.1px;top:253px;font-size:12px;line-height:14px;height:14px;transform:scaleX(0.9726);">Computer\HKEY_LOCAL_MACHINE\SYSTEM\ControlSet001\services\googleupdate</span>
<svg class="a" style="left:175px;top:298px;width:44px;height:36px" viewBox="0 0 44 36" preserveAspectRatio="none"><defs><linearGradient id="eg1" x1="0" y1="0" x2="0.35" y2="1"><stop offset="0" stop-color="#4c6db4"/><stop offset=".55" stop-color="#4f9a86"/><stop offset="1" stop-color="#62b455"/></linearGradient><linearGradient id="eg2" x1="0" y1="0" x2="0" y2="1"><stop offset="0" stop-color="#4f6db5"/><stop offset="1" stop-color="#63b458"/></linearGradient></defs><rect x="0.5" y="0.5" width="43" height="35" rx="1.5" fill="#ececec" stroke="#c4c7ca"/><rect x="2.5" y="4.5" width="39" height="28" fill="#fff" stroke="#dcdcdc" stroke-width=".6"/><rect x="4.5" y="7" width="18" height="23.5" fill="url(#eg1)"/><rect x="25.5" y="7.5" width="8.5" height="1" fill="#d0d0d0"/><rect x="25.5" y="10.1" width="8.5" height="1" fill="#d0d0d0"/><rect x="25.5" y="12.7" width="8.5" height="1" fill="#d0d0d0"/><rect x="25.5" y="15.3" width="8.5" height="1" fill="#d0d0d0"/><rect x="25.5" y="17.9" width="8.5" height="1" fill="#d0d0d0"/><rect x="25.5" y="20.5" width="8.5" height="1" fill="#d0d0d0"/><rect x="25.5" y="23.1" width="8.5" height="1" fill="#d0d0d0"/><rect x="25.5" y="25.7" width="8.5" height="1" fill="#d0d0d0"/><rect x="25.5" y="28.3" width="8.5" height="1" fill="#d0d0d0"/><rect x="36.5" y="7" width="4.2" height="15" fill="url(#eg2)"/><rect x="36.5" y="22" width="4.2" height="9" fill="#ebebeb"/><rect x="32.5" y="1.6" width="2" height="1.2" fill="#9a9a9a"/><rect x="35.7" y="1.6" width="2" height="1.2" fill="#9a9a9a"/><rect x="38.9" y="1.6" width="2" height="1.2" fill="#9a9a9a"/></svg><span class="x n" style="left:162.4px;top:346px;font-size:12px;line-height:14px;height:14px;color:#fff;transform:scaleX(0.9790);text-shadow:0 1px 2px rgba(0,0,0,.8),0 0 2px rgba(0,0,0,.5);">tjAOITTnXUT</span><span class="x n" style="left:171.9px;top:360px;font-size:12px;line-height:14px;height:14px;color:#fff;transform:scaleX(0.9411);text-shadow:0 1px 2px rgba(0,0,0,.8),0 0 2px rgba(0,0,0,.5);">OMbL.exe</span>
<div class="win" style="left:247px;top:289px;width:377px;height:515px"><div class="bg"><div class="a" style="left:0;top:0;right:0;bottom:0;background:linear-gradient(180deg,#0d82b9 0,#0a7fb6 30px,#097eb5 100%)"></div><div class="a" style="left:0;top:0;width:120px;height:60px;background:radial-gradient(ellipse 100% 100% at 0 0,rgba(255,255,255,.16) 0,rgba(255,255,255,0) 100%)"></div><div class="a" style="left:-14px;top:1px;width:250px;height:27px;border-radius:13px;background:rgba(255,255,255,.42);filter:blur(9px)"></div><div class="a" style="right:0;top:0;width:175px;height:60px;background:radial-gradient(ellipse 100% 100% at 100% 0,rgba(255,255,255,.23) 0,rgba(255,255,255,.19) 35%,rgba(255,255,255,0) 100%)"></div><div class="a" style="right:0;top:0;width:8px;height:156px;background:linear-gradient(180deg,rgba(255,255,255,.2) 0,rgba(255,255,255,.2) 142px,rgba(255,255,255,0) 100%)"></div></div></div>
<span class="x title n" style="left:275.6px;top:297px;font-size:12px;line-height:14px;height:14px;transform:scaleX(0.9747);">tjAOITTnXUTOMbL.exe Properties</span><svg class="a" style="left:255px;top:298px;width:15px;height:12px" viewBox="0 0 44 36" preserveAspectRatio="none"><defs><linearGradient id="eg1" x1="0" y1="0" x2="0.35" y2="1"><stop offset="0" stop-color="#4c6db4"/><stop offset=".55" stop-color="#4f9a86"/><stop offset="1" stop-color="#62b455"/></linearGradient><linearGradient id="eg2" x1="0" y1="0" x2="0" y2="1"><stop offset="0" stop-color="#4f6db5"/><stop offset="1" stop-color="#63b458"/></linearGradient></defs><rect x="0.5" y="0.5" width="43" height="35" rx="1.5" fill="#ececec" stroke="#c4c7ca"/><rect x="2.5" y="4.5" width="39" height="28" fill="#fff" stroke="#dcdcdc" stroke-width=".6"/><rect x="4.5" y="7" width="18" height="23.5" fill="url(#eg1)"/><rect x="25.5" y="7.5" width="8.5" height="1" fill="#d0d0d0"/><rect x="25.5" y="10.1" width="8.5" height="1" fill="#d0d0d0"/><rect x="25.5" y="12.7" width="8.5" height="1" fill="#d0d0d0"/><rect x="25.5" y="15.3" width="8.5" height="1" fill="#d0d0d0"/><rect x="25.5" y="17.9" width="8.5" height="1" fill="#d0d0d0"/><rect x="25.5" y="20.5" width="8.5" height="1" fill="#d0d0d0"/><rect x="25.5" y="23.1" width="8.5" height="1" fill="#d0d0d0"/><rect x="25.5" y="25.7" width="8.5" height="1" fill="#d0d0d0"/><rect x="25.5" y="28.3" width="8.5" height="1" fill="#d0d0d0"/><rect x="36.5" y="7" width="4.2" height="15" fill="url(#eg2)"/><rect x="36.5" y="22" width="4.2" height="9" fill="#ebebeb"/><rect x="32.5" y="1.6" width="2" height="1.2" fill="#9a9a9a"/><rect x="35.7" y="1.6" width="2" height="1.2" fill="#9a9a9a"/><rect x="38.9" y="1.6" width="2" height="1.2" fill="#9a9a9a"/></svg><div class="cbtns" style="left:570px;top:290px;width:48px"></div><svg class="a" style="left:588px;top:293px;width:13px;height:11px" viewBox="0 0 13 11"><path d="M1 1 L4.4 1 L6.5 3.4 L8.6 1 L12 1 L8.4 5.4 L12 10 L8.6 10 L6.5 7.5 L4.4 10 L1 10 L4.6 5.4 Z" fill="#fff" stroke="#4a5362" stroke-width="1" stroke-linejoin="round"/></svg>
<div class="cedge" style="left:254px;top:318px;width:363px;height:479px"></div>
<div class="a" style="left:255px;top:319px;width:361px;height:477px;background:#f0f0f0"></div>
<div class="a" style="left:261px;top:346px;width:347px;height:413px;box-sizing:border-box;border:1px solid #898c95;background:#fff"></div>
<div class="tab" style="left:263px;top:328px;width:49px;height:18px"></div><span class="x n" style="left:268.6px;top:331px;font-size:12px;line-height:14px;height:14px;transform:scaleX(0.8664);">General</span><div class="tab" style="left:313px;top:328px;width:69px;height:18px"></div><span class="x n" style="left:317.6px;top:331px;font-size:12px;line-height:14px;height:14px;transform:scaleX(0.8369);">Compatibility</span><div class="tab" style="left:383px;top:328px;width:47px;height:18px"></div><span class="x n" style="left:387.9px;top:331px;font-size:12px;line-height:14px;height:14px;transform:scaleX(0.8649);">Security</span><div class="tab" style="left:478px;top:328px;width:92px;height:18px"></div><span class="x n" style="left:482.6px;top:331px;font-size:12px;line-height:14px;height:14px;transform:scaleX(0.8590);">Previous Versions</span><div class="a" style="left:430px;top:326px;width:48px;height:21px;box-sizing:border-box;border:1px solid #898c95;border-bottom:none;background:#fff"></div><span class="x n" style="left:438.6px;top:329px;font-size:12px;line-height:14px;height:14px;transform:scaleX(0.8313);">Details</span>
<div class="a" style="left:276px;top:359px;width:318px;height:358px;box-sizing:border-box;border:1px solid #828790;background:#fff"></div><div class="hdr" style="left:277px;top:360px;width:316px;height:23px"></div><div class="hsep" style="left:362px;top:360px;height:23px"></div><div class="hsep" style="left:574px;top:360px;height:23px"></div><span class="x n" style="left:284.1px;top:366px;font-size:12px;line-height:14px;height:14px;transform:scaleX(0.8598);">Property</span><span class="x n" style="left:369.1px;top:366px;font-size:12px;line-height:14px;height:14px;transform:scaleX(0.8721);">Value</span><span class="x" style="left:290px;top:388px;font-size:12px;line-height:14px;height:14px;color:#1e32b4;">Description</span><div class="a" style="left:355px;top:394px;width:226px;height:1px;background:#dfe6f3"></div><div class="a" style="left:282px;top:406px;width:293px;height:17px;background:#ededed"></div><span class="x n" style="left:283.9px;top:408px;font-size:12px;line-height:14px;height:14px;transform:scaleX(0.8525);">File description</span><span class="x n" style="left:368.9px;top:408px;font-size:12px;line-height:14px;height:14px;transform:scaleX(0.8954);">Rjaba qcxxhoj - vdybpesvpxuxavvq kxa...</span><span class="x n" style="left:283.9px;top:426px;font-size:12px;line-height:14px;height:14px;transform:scaleX(0.8764);">Type</span><span class="x n" style="left:368.9px;top:426px;font-size:12px;line-height:14px;height:14px;transform:scaleX(0.8720);">Application</span><span class="x n" style="left:283.9px;top:444px;font-size:12px;line-height:14px;height:14px;transform:scaleX(0.8507);">File version</span><span class="x n" style="left:369.6px;top:444px;font-size:12px;line-height:14px;height:14px;transform:scaleX(0.8773);">1.0.0.0</span><span class="x n" style="left:283.9px;top:462px;font-size:12px;line-height:14px;height:14px;transform:scaleX(0.8673);">Product name</span><span class="x n" style="left:283.9px;top:480px;font-size:12px;line-height:14px;height:14px;transform:scaleX(0.8780);">Product version</span><span class="x n" style="left:369.6px;top:480px;font-size:12px;line-height:14px;height:14px;transform:scaleX(0.8270);">1.0</span><span class="x n" style="left:283.9px;top:498px;font-size:12px;line-height:14px;height:14px;transform:scaleX(0.8333);">Copyright</span><span class="x n" style="left:368.9px;top:498px;font-size:12px;line-height:14px;height:14px;transform:scaleX(0.8604);">All rights reserved.</span><span class="x n" style="left:283.9px;top:516px;font-size:12px;line-height:14px;height:14px;transform:scaleX(0.8054);">Size</span><span class="x n" style="left:368.9px;top:516px;font-size:12px;line-height:14px;height:14px;transform:scaleX(0.8762);">390 KB</span><span class="x n" style="left:283.9px;top:534px;font-size:12px;line-height:14px;height:14px;transform:scaleX(0.8616);">Date modified</span><span class="x n" style="left:369.6px;top:534px;font-size:12px;line-height:14px;height:14px;transform:scaleX(0.9248);">1/13/2015 3:27 PM</span><span class="x n" style="left:283.9px;top:552px;font-size:12px;line-height:14px;height:14px;transform:scaleX(0.8841);">Language</span><span class="x n" style="left:368.9px;top:552px;font-size:12px;line-height:14px;height:14px;transform:scaleX(0.8677);">English (United States)</span><span class="x n" style="left:283.9px;top:570px;font-size:12px;line-height:14px;height:14px;transform:scaleX(0.8462);">Original filename</span><span class="x n" style="left:368.9px;top:570px;font-size:12px;line-height:14px;height:14px;transform:scaleX(0.8803);">Avastojeb</span>
<span class="x" style="left:275.9px;top:728px;font-size:12px;line-height:14px;height:14px;color:#0066cc;transform:scaleX(0.8745);text-decoration:underline;">Remove Properties and Personal Information</span><div class="btn" style="left:374px;top:767px;width:73px;height:21px;"></div><span class="x n" style="left:402.6px;top:771px;font-size:12px;line-height:14px;height:14px;color:#000;transform:scaleX(0.8937);">OK</span><div class="btn" style="left:455px;top:767px;width:73px;height:21px;"></div><span class="x n" style="left:475.1px;top:771px;font-size:12px;line-height:14px;height:14px;color:#000;transform:scaleX(0.8699);">Cancel</span><div class="btn" style="left:536px;top:767px;width:73px;height:21px;border-color:#adb2b5;background:#f4f4f4;box-shadow:inset 0 0 0 1px #fcfcfc;"></div><span class="x n" style="left:559.1px;top:771px;font-size:12px;line-height:14px;height:14px;color:#838383;transform:scaleX(0.8824);">Apply</span>
</body></html>
